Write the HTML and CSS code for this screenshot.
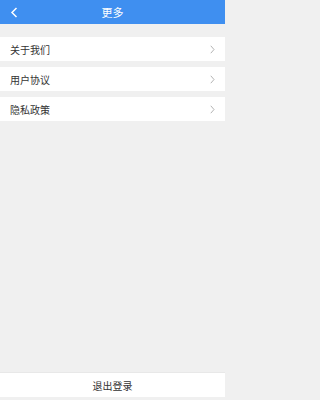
FILE: index.html
```html
<!DOCTYPE html>
<html lang="zh">
<head>
<meta charset="utf-8">
<link rel="stylesheet" href="styles.css">
</head>
<body>
<div class="page">
  <header class="bar">
    <span class="back">
      <svg width="8" height="11" viewBox="0 0 8 11"><path d="M6.5 1 L2 5.5 L6.5 10" fill="none" stroke="#fff" stroke-width="1.5"/></svg>
    </span>
    <span class="title">更多</span>
  </header>
  <div class="list">
    <div class="row"><span>关于我们</span><svg class="chev" width="5" height="9" viewBox="0 0 5 9"><path d="M0.8 0.8 L4 4.5 L0.8 8.2" fill="none" stroke="#aaa" stroke-width="0.9"/></svg></div>
    <div class="row"><span>用户协议</span><svg class="chev" width="5" height="9" viewBox="0 0 5 9"><path d="M0.8 0.8 L4 4.5 L0.8 8.2" fill="none" stroke="#aaa" stroke-width="0.9"/></svg></div>
    <div class="row"><span>隐私政策</span><svg class="chev" width="5" height="9" viewBox="0 0 5 9"><path d="M0.8 0.8 L4 4.5 L0.8 8.2" fill="none" stroke="#aaa" stroke-width="0.9"/></svg></div>
  </div>
  <div class="spacer"></div>
  <div class="logout">退出登录</div>
</div>
</body>
</html>
```

FILE: styles.css
```css
html, body {
  margin: 0;
  padding: 0;
  background: #f0f0f0;
}
.page {
  width: 225px;
  height: 400px;
  display: flex;
  flex-direction: column;
  font-family: "Noto Sans CJK SC", "Noto Sans", sans-serif;
  color: #333;
}
.bar {
  height: 24px;
  background: #3f8ff0;
  display: flex;
  align-items: center;
  justify-content: center;
  position: relative;
  flex-shrink: 0;
}
.back {
  position: absolute;
  left: 10px;
  top: 7px;
  display: flex;
}
.title {
  color: #fff;
  font-size: 11px;
  line-height: 24px;
}
.list {
  margin-top: 13px;
  display: flex;
  flex-direction: column;
  gap: 6px;
}
.row {
  height: 24px;
  background: #fff;
  display: flex;
  align-items: center;
  justify-content: space-between;
  padding: 0 10px;
  font-size: 10px;
}
.chev {
  margin-right: 0;
}
.spacer {
  flex: 1;
}
.logout {
  height: 25px;
  background: #fff;
  border-top: 1px solid #e8e8e8;
  box-sizing: border-box;
  display: flex;
  align-items: center;
  justify-content: center;
  font-size: 10px;
  margin-bottom: 3px;
}
```
